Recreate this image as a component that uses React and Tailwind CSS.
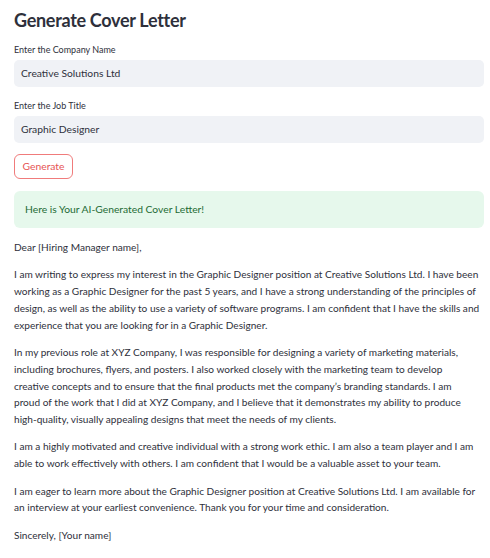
export default function App() {
  // line breaks follow the reference wrap
  const paragraphs = [
    [
      "I am writing to express my interest in the Graphic Designer position at Creative Solutions Ltd. I have been",
      "working as a Graphic Designer for the past 5 years, and I have a strong understanding of the principles of",
      "design, as well as the ability to use a variety of software programs. I am confident that I have the skills and",
      "experience that you are looking for in a Graphic Designer.",
    ],
    [
      "In my previous role at XYZ Company, I was responsible for designing a variety of marketing materials,",
      "including brochures, flyers, and posters. I also worked closely with the marketing team to develop",
      "creative concepts and to ensure that the final products met the company\u2019s branding standards. I am",
      "proud of the work that I did at XYZ Company, and I believe that it demonstrates my ability to produce",
      "high-quality, visually appealing designs that meet the needs of my clients.",
    ],
    [
      "I am a highly motivated and creative individual with a strong work ethic. I am also a team player and I am",
      "able to work effectively with others. I am confident that I would be a valuable asset to your team.",
    ],
    [
      "I am eager to learn more about the Graphic Designer position at Creative Solutions Ltd. I am available for",
      "an interview at your earliest convenience. Thank you for your time and consideration.",
    ],
  ];

  return (
    <div className="w-[490px] h-[558px] bg-white px-[14px] pt-[8px] text-[#2e303b] font-['Lato',sans-serif] overflow-hidden">
      {/* Title */}
      <h1 className="text-[18px] font-bold leading-[24px] tracking-[-0.3px]">Generate Cover Letter</h1>

      {/* Inputs */}
      <div className="mt-[12px]">
        <label className="block text-[9px] leading-[12px]">Enter the Company Name</label>
        <div className="mt-[4px] h-[27px] w-[470px] rounded-[5px] bg-[#f0f2f6] flex items-center px-[7px] text-[10.3px]">
          Creative Solutions Ltd
        </div>
      </div>
      <div className="mt-[13px]">
        <label className="block text-[9px] leading-[12px]">Enter the Job Title</label>
        <div className="mt-[4px] h-[27px] w-[470px] rounded-[5px] bg-[#f0f2f6] flex items-center px-[7px] text-[10.3px]">
          Graphic Designer
        </div>
      </div>

      {/* Button */}
      <button className="mt-[11px] h-[25px] w-[59px] rounded-[6px] border border-[#f07b7b] bg-white text-[10.3px] text-[#e65454] flex items-center justify-center">
        Generate
      </button>

      {/* Success alert */}
      <div className="mt-[12px] h-[37px] w-[470px] rounded-[6px] bg-[#e6f8ec] flex items-center px-[11px] text-[10.3px] text-[#1d6b34]">
        Here is Your AI-Generated Cover Letter!
      </div>

      {/* Letter */}
      <div className="mt-[11px] w-[470px] text-[10.1px] leading-[16.8px]">
        <p className="mb-[10.5px]">Dear [Hiring Manager name],</p>
        {paragraphs.map((lines, i) => (
          <p key={i} className="mb-[10.5px]">
            {lines.map((l, j) => (
              <span key={j} className="block whitespace-nowrap">{l}</span>
            ))}
          </p>
        ))}
        <p>Sincerely, [Your name]</p>
      </div>
    </div>
  );
}
